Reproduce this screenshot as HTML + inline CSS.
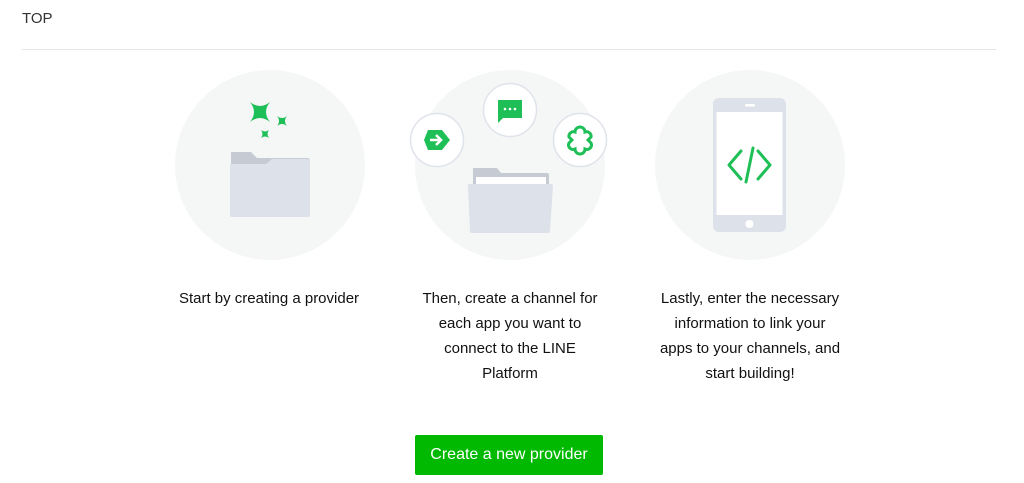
<!DOCTYPE html>
<html><head><meta charset="utf-8"><style>
body{margin:0;width:1024px;height:483px;background:#fff;font-family:"Liberation Sans",sans-serif;position:relative;overflow:hidden;color:#111}
.top{position:absolute;left:22px;top:10px;font-size:15px;color:#333}
.hr{position:absolute;left:22px;top:49px;width:974px;height:1px;background:#e6e6e6}
.t{position:absolute;width:240px;text-align:center;font-size:15px;line-height:25px;top:286px;color:#111;white-space:nowrap}
.btn{position:absolute;left:415px;top:435px;width:188px;height:40px;background:#00b900;border-radius:2px;color:#fff;font-size:16px;line-height:40px;text-align:center}
svg{position:absolute;left:0;top:0}
</style></head><body>
<div class="top">TOP</div>
<div class="hr"></div>
<svg width="1024" height="483">
<g fill="#f5f6f6">
<circle cx="270" cy="165" r="95"/><circle cx="510" cy="165" r="95"/><circle cx="750" cy="165" r="95"/>
</g>
<path d="M231 152h20l6 6h50q3 0 3 3v10h-79z" fill="#c5cad3"/>
<path d="M230 164h36l6-5h35q3 0 3 3v53q0 2-2 2h-76q-2 0-2-2z" fill="#dde2ea"/>
<g fill="#1fbf57">
<path d="M250 102Q260 110 270 102Q262 112 270 122Q260 114 250 122Q258 112 250 102z"/>
<path d="M277 116Q282 120 287 116Q283 121 287 126Q282 122 277 126Q281 121 277 116z"/>
<path d="M261 130Q265 133 269 130Q266 134 269 138Q265 135 261 138Q264 134 261 130z"/>
</g>
<path d="M473 168h24l4 5h46q2 0 2 2v10h-76z" fill="#c5cad3"/>
<rect x="476" y="177" width="70" height="10" fill="#fff"/>
<path d="M468 186q0-2 2-2h81q2 0 2 2l-3 45q0 2-2 2h-76q-2 0-2-2z" fill="#dde2ea"/>
<g fill="#fff" stroke="#dfe3ea" stroke-width="1.5">
<circle cx="437" cy="140" r="26.5"/><circle cx="510" cy="110" r="26.5"/><circle cx="580" cy="140" r="26.5"/>
</g>
<path d="M428 130h14l8 10l-8 10h-14l-4-10z" fill="#1fbf57"/>
<path d="M430 140h10M436 135l5 5l-5 5" stroke="#fff" stroke-width="2.6" fill="none"/>
<path d="M498 100h24v18h-19l-5 5z" fill="#1fbf57"/>
<g fill="#fff"><circle cx="505" cy="109" r="1.3"/><circle cx="510" cy="109" r="1.3"/><circle cx="515" cy="109" r="1.3"/></g>
<path d="M575 132a4.5 4.5 0 0 1 10 0a4.5 4.5 0 0 1 6 5l-3 3l3 3a4.5 4.5 0 0 1-6 6a4.5 4.5 0 0 1-10 0a4.5 4.5 0 0 1-6-6l3-3l-3-3a4.5 4.5 0 0 1 6-5z" fill="none" stroke="#1fbf57" stroke-width="3"/>
<rect x="713" y="98" width="73" height="134" rx="6" fill="#dde2ea"/>
<rect x="716.5" y="112" width="66" height="103" fill="#fff"/>
<rect x="745" y="104" width="10" height="2.5" rx="1" fill="#fff"/>
<circle cx="749.5" cy="224" r="4" fill="#fff"/>
<g stroke="#1fbf57" stroke-width="3" fill="none" stroke-linecap="round" stroke-linejoin="round">
<path d="M741 151l-12 14l12 14M758 151l12 14l-12 14M753 148l-7 34"/>
</g>
</svg>
<div class="t" style="left:149px">Start by creating a provider</div>
<div class="t" style="left:390px">Then, create a channel for<br>each app you want to<br>connect to the LINE<br>Platform</div>
<div class="t" style="left:630px">Lastly, enter the necessary<br>information to link your<br>apps to your channels, and<br>start building!</div>
<div class="btn">Create a new provider</div>
</body></html>
